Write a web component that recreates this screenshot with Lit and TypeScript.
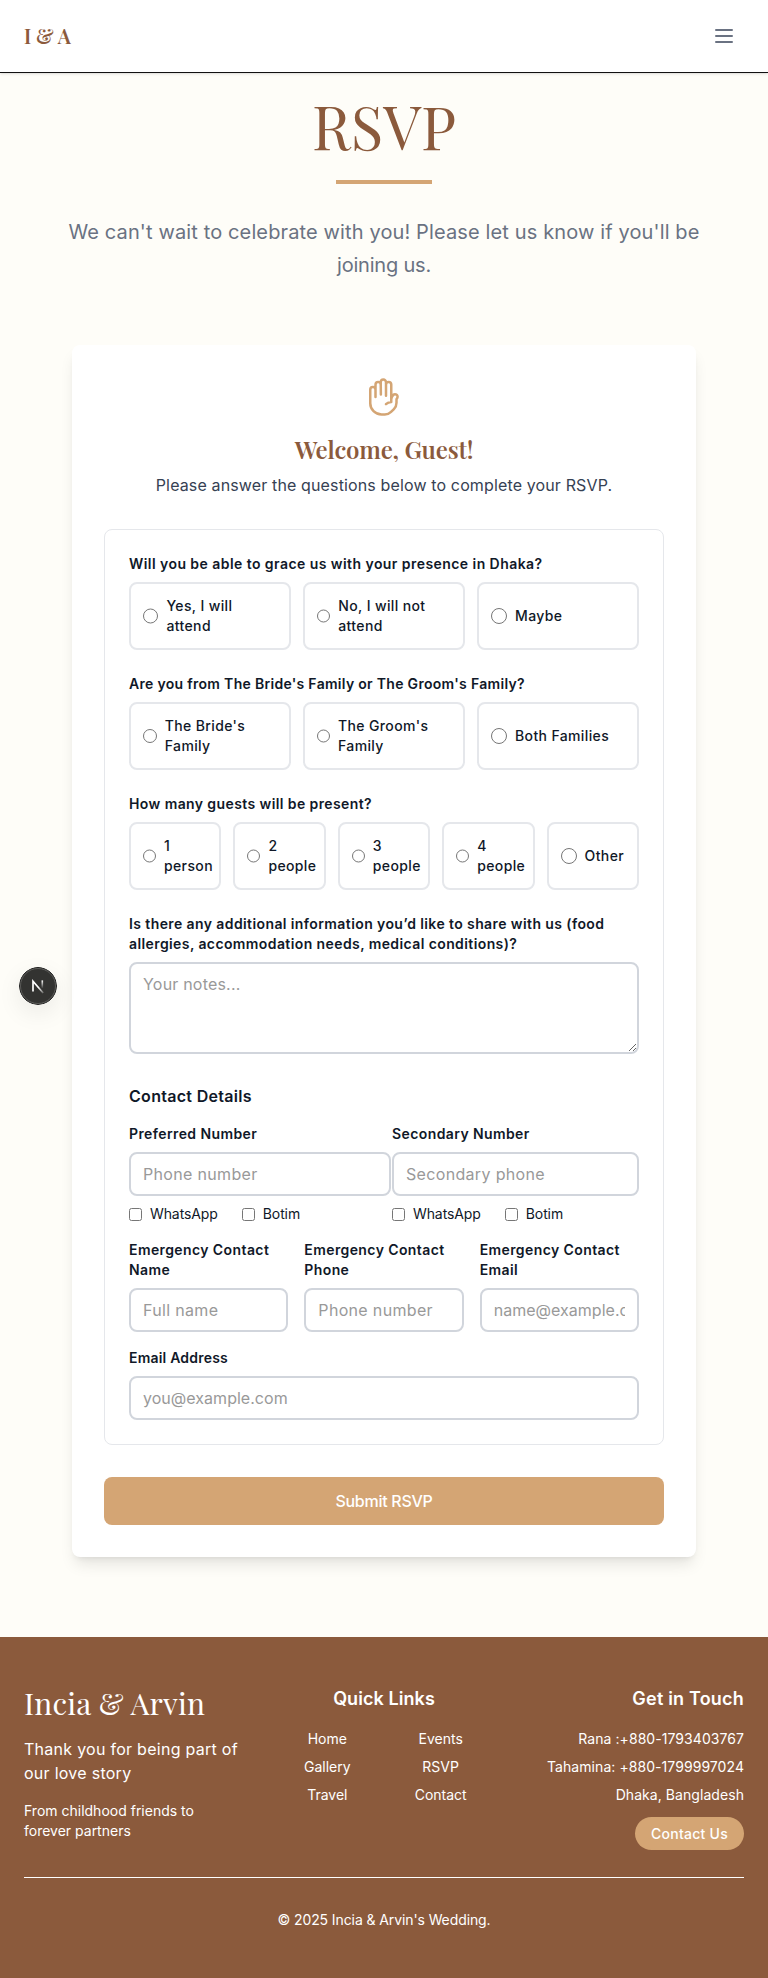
import { LitElement, html, css } from "lit";
import { customElement } from "lit/decorators.js";

const QUESTIONS = [
  { name: "attend", tone: "t43", label: "Will you be able to grace us with your presence in Dhaka?", cols: "three", options: ["Yes, I will attend", "No, I will not attend", "Maybe"] },
  { name: "side", tone: "t30", label: "Are you from The Bride's Family or The Groom's Family?", cols: "three", options: ["The Bride's Family", "The Groom's Family", "Both Families"] },
  { name: "guests", tone: "t38", label: "How many guests will be present?", cols: "five", options: ["1 person", "2 people", "3 people", "4 people", "Other"] },
];
const LINKS = ["Home", "Events", "Gallery", "RSVP", "Travel", "Contact"];

@customElement("app-root")
export class AppRoot extends LitElement {
  static styles = css`
    :host { display: block; font-family: Inter, sans-serif; font-size: 16px; line-height: 24px; color: #101828; background: #fefdf8; }
    * { box-sizing: border-box; }
    h1, h2, h3, p { margin: 0; font-weight: 400; }
    .serif { font-family: "Playfair Display", "Liberation Serif", serif; }
    .header { height: 73px; background: #fff; border-bottom: 1px solid #111; box-shadow: 0 1px 3px rgba(0,0,0,.1), 0 1px 2px -1px rgba(0,0,0,.1); display: flex; align-items: center; justify-content: space-between; padding: 0 32px 0 24px; }
    .logo { font-size: 20px; font-weight: 600; color: #8b5a3c; line-height: 28px; }
    .menu { display: block; width: 24px; height: 24px; color: #6a7282; }
    .hero { text-align: center; padding: 22px 64px 64px; }
    .hero h1 { font-size: 60px; line-height: 60px; color: #8b5a3c; }
    .rule { width: 96px; height: 4px; background: #d4a574; margin: 25px auto 32px; }
    .hero p { font-size: 20px; line-height: 32.5px; color: #6a7282; letter-spacing: .13px; }
    .hero p span { letter-spacing: -.2px; }
    .card { margin: 0 72px 80px; padding: 32px; background: #fff; border-radius: 8px; box-shadow: 0 10px 15px -3px rgba(0,0,0,.1), 0 4px 6px -4px rgba(0,0,0,.1); }
    .welcome { text-align: center; height: 152px; }
    .hand { display: block; width: 40px; height: 40px; margin: 0 auto 16px; color: #d4a574; }
    .welcome h2 { font-size: 24px; line-height: 32px; font-weight: 600; color: #8b5a3c; margin-bottom: 8px; letter-spacing: -.18px; }
    .welcome p { color: #364153; letter-spacing: .135px; }
    .fields { border: 1px solid #e5e7eb; border-radius: 8px; padding: 24px; }
    .label { display: block; font-size: 14px; line-height: 20px; font-weight: 600; margin-bottom: 8px; }
    .t20 { letter-spacing: .2px; }
    .t30 { letter-spacing: .3px; }
    .t38 { letter-spacing: .4px; }
    .t43 { letter-spacing: .44px; }
    .question { margin-bottom: 24px; }
    .options { display: grid; gap: 12px; }
    .three { grid-template-columns: repeat(3, minmax(0, 1fr)); }
    .five { grid-template-columns: repeat(5, minmax(0, 1fr)); }
    .option { display: flex; align-items: center; gap: 8px; border: 2px solid #e5e7eb; border-radius: 8px; padding: 12px; height: 68px; font-size: 14px; line-height: 20px; font-weight: 500; letter-spacing: .37px; }
    .option input { width: 16px; height: 16px; margin: 0; }
    .input { display: block; width: 100%; border: 2px solid #d1d5dc; border-radius: 8px; padding: 8px 12px; font: inherit; line-height: 24px; height: 44px; background: #fff; color: inherit; letter-spacing: .33px; }
    .input.email { letter-spacing: .03px; }
    .input::placeholder { color: #999; opacity: 1; }
    .notes { height: 92px; letter-spacing: .2px; }
    .subtitle { font-size: 16px; line-height: 24px; font-weight: 600; margin: 30px 0 16px; letter-spacing: .3px; }
    .phones { display: grid; grid-template-columns: 262px 247px; gap: 1px; }
    .checks { display: flex; gap: 24px; margin: 8px 0 16px; font-size: 14px; line-height: 20px; letter-spacing: -.1px; }
    .check { display: flex; align-items: center; gap: 8px; }
    .check input { margin: 0; }
    .emergency { display: grid; grid-template-columns: repeat(3, minmax(0, 1fr)); gap: 16px; margin-bottom: 16px; }
    .submit { display: block; width: 100%; height: 48px; margin-top: 32px; border: 0; border-radius: 8px; background: #d4a574; color: #fff; font: 500 16px/24px Inter, sans-serif; letter-spacing: -.28px; }
    .footer { background: #8b5a3c; color: #fff; height: 341px; padding: 48px 24px 0; }
    .cols { display: grid; grid-template-columns: repeat(3, minmax(0, 1fr)); gap: 32px; height: 192px; }
    .brand h3 { font-size: 30px; line-height: 36px; margin-bottom: 16px; letter-spacing: .18px; }
    .brand .thanks { margin-bottom: 16px; letter-spacing: .27px; }
    .small { font-size: 14px; line-height: 20px; }
    .footer h4 { margin: 0 0 16px; font-size: 18px; line-height: 28px; font-weight: 600; }
    .quick { text-align: center; }
    .quick h4 { letter-spacing: .07px; }
    .links { display: grid; grid-template-columns: 1fr 1fr; gap: 8px; font-size: 14px; line-height: 20px; }
    .touch { text-align: right; display: flex; flex-direction: column; align-items: flex-end; }
    .touch h4 { letter-spacing: .2px; }
    .touch p { font-size: 14px; line-height: 20px; margin-bottom: 8px; white-space: nowrap; letter-spacing: .06px; }
    .pill { margin-top: 4px; background: #d4a574; border-radius: 17px; height: 33px; line-height: 33px; padding: 0 16px; font-size: 14px; font-weight: 500; letter-spacing: .25px; }
    .copy { border-top: 1px solid #fff; padding-top: 32px; text-align: center; font-size: 14px; line-height: 20px; letter-spacing: -.1px; }
    .badge { position: fixed; left: 19px; top: 967px; width: 38px; height: 38px; border-radius: 50%; box-shadow: 0 8px 24px rgba(0,0,0,.08); }
  `;

  checks() {
    return html`<div class="checks">${["WhatsApp", "Botim"].map((t) => html`<label class="check"><input type="checkbox" />${t}</label>`)}</div>`;
  }
  field(label: string, placeholder: string, tone = "t38", kind = "") {
    return html`<div><span class="label ${tone}">${label}</span><input class="input ${kind}" placeholder=${placeholder} /></div>`;
  }

  render() {
    return html`
      <header class="header">
        <div class="logo serif">I &amp; A</div>
        <svg class="menu" viewBox="0 0 24 24" fill="none" stroke="currentColor" stroke-width="2" stroke-linecap="round"><path d="M4 6h16M4 12h16M4 18h16" /></svg>
      </header>
      <section class="hero">
        <h1 class="serif">RSVP</h1>
        <div class="rule"></div>
        <p>We can't wait to celebrate with you! Please let us know if you'll be <span>joining us.</span></p>
      </section>
      <main class="card">
        <div class="welcome">
          <svg class="hand" viewBox="0 0 24 24" fill="none" stroke="currentColor" stroke-width="1.5" stroke-linecap="round" stroke-linejoin="round"><path d="M10.05 4.575a1.575 1.575 0 1 0-3.15 0v3m3.15-3v-1.5a1.575 1.575 0 0 1 3.15 0v1.5m-3.15 0 .075 5.925m3.075.75V4.575m0 0a1.575 1.575 0 0 1 3.15 0V15M6.9 7.575a1.575 1.575 0 1 0-3.15 0v8.175a6.75 6.75 0 0 0 6.75 6.75h2.018a5.25 5.25 0 0 0 3.712-1.538l1.732-1.732a5.25 5.25 0 0 0 1.538-3.712l.003-2.024a.668.668 0 0 1 .198-.471 1.575 1.575 0 1 0-2.228-2.228 3.818 3.818 0 0 0-1.12 2.687M6.9 7.575V12m6.27 4.318A4.49 4.49 0 0 1 16.35 15m.002 0h-.002" /></svg>
          <h2 class="serif">Welcome, Guest!</h2>
          <p>Please answer the questions below to complete your RSVP.</p>
        </div>
        <div class="fields">
          ${QUESTIONS.map((q) => html`<div class="question"><span class="label ${q.tone}">${q.label}</span>
            <div class="options ${q.cols}">${q.options.map((o) => html`<label class="option"><input type="radio" name=${q.name} /><span>${o}</span></label>`)}</div></div>`)}
          <span class="label t38">Is there any additional information you’d like to share with us (food allergies, accommodation needs, medical conditions)?</span>
          <textarea class="input notes" rows="3" placeholder="Your notes..."></textarea>
          <h3 class="subtitle">Contact Details</h3>
          <div class="phones">
            <div>${this.field("Preferred Number", "Phone number")}${this.checks()}</div>
            <div>${this.field("Secondary Number", "Secondary phone")}${this.checks()}</div>
          </div>
          <div class="emergency">
            ${this.field("Emergency Contact Name", "Full name")}
            ${this.field("Emergency Contact Phone", "Phone number")}
            ${this.field("Emergency Contact Email", "name@example.com", "t38", "email")}
          </div>
          ${this.field("Email Address", "you@example.com", "t20", "email")}
        </div>
        <button class="submit">Submit RSVP</button>
      </main>
      <footer class="footer">
        <div class="cols">
          <div class="brand"><h3 class="serif">Incia &amp; Arvin</h3><p class="thanks">Thank you for being part of our love story</p><p class="small">From childhood friends to forever partners</p></div>
          <div class="quick"><h4>Quick Links</h4><div class="links">${LINKS.map((l) => html`<a>${l}</a>`)}</div></div>
          <div class="touch"><h4>Get in Touch</h4><p>Rana :+880-1793403767</p><p>Tahamina: +880-1799997024</p><p>Dhaka, Bangladesh</p><a class="pill">Contact Us</a></div>
        </div>
        <div class="copy">© 2025 Incia &amp; Arvin's Wedding.</div>
      </footer>
      <svg class="badge" viewBox="0 0 38 38" fill="none">
        <defs>
          <linearGradient id="diag" gradientUnits="userSpaceOnUse" x1="20" y1="20" x2="25" y2="26"><stop stop-color="#fff" /><stop offset="1" stop-color="#fff" stop-opacity="0.2" /></linearGradient>
          <linearGradient id="stem" gradientUnits="userSpaceOnUse" x1="0" y1="13.5" x2="0" y2="21.5"><stop stop-color="#fff" /><stop offset="1" stop-color="#fff" stop-opacity="0" /></linearGradient>
        </defs>
        <circle cx="19" cy="19" r="18.5" fill="#333331" stroke="#1f1f1f" />
        <circle cx="19" cy="19" r="17.5" stroke="#5c5c5a" />
        <path d="M14 24.6V14.2L24.2 26" stroke="url(#diag)" stroke-width="1.7" />
        <rect x="22.5" y="13.4" width="1.6" height="8.5" fill="url(#stem)" />
      </svg>
    `;
  }
}
